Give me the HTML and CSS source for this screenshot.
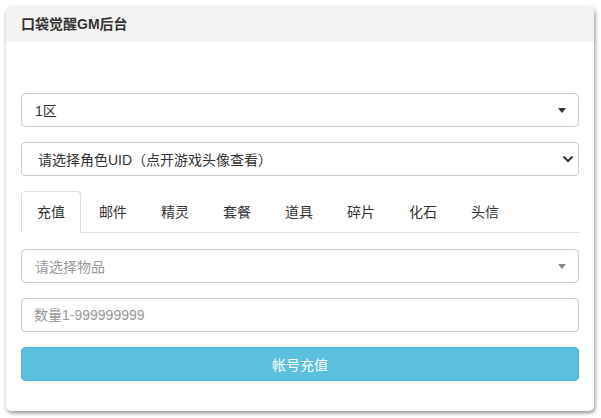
FILE: index.html
```html
<!DOCTYPE html>
<html lang="zh-CN">
<head>
  <meta charset="UTF-8" />
  <meta name="viewport" content="width=device-width, initial-scale=1.0">
  <title>口袋觉醒GM后台</title>
  <link rel="stylesheet" href="styles.css">
</head>
<body>
  <div class="panel">
    <div class="panel-heading">口袋觉醒GM后台</div>
    <div class="panel-body">
      <div class="form-group">
        <div class="select2">
          <span class="select2-text">1区</span>
          <span class="caret"></span>
        </div>
      </div>
      <div class="form-group">
        <div class="form-select">
          <span>请选择角色UID（点开游戏头像查看）</span>
          <svg class="chevron" width="12" height="8" viewBox="0 0 12 8"><path d="M1.5 1.5 L6 6 L10.5 1.5" fill="none" stroke="#333" stroke-width="2"/></svg>
        </div>
      </div>
      <ul class="nav-tabs">
        <li class="active">充值</li>
        <li>邮件</li>
        <li>精灵</li>
        <li>套餐</li>
        <li>道具</li>
        <li>碎片</li>
        <li>化石</li>
        <li>头信</li>
      </ul>
      <div class="tab-content">
        <div class="form-group">
          <div class="select2">
            <span class="select2-text placeholder">请选择物品</span>
            <span class="caret light"></span>
          </div>
        </div>
        <div class="form-group">
          <input class="form-control" type="text" placeholder="数量1-999999999">
        </div>
        <button class="btn-info">帐号充值</button>
      </div>
    </div>
  </div>
</body>
</html>
```

FILE: styles.css
```css
body { margin: 0; padding: 7px 6px; background: #fff; font-family: "Liberation Sans", "Noto Sans CJK SC", sans-serif; font-size: 14px; color: #333; }
.panel { width: 588px; background: #fff; border-radius: 5px; box-shadow: 1px 2px 4px rgba(0,0,0,0.45); overflow: hidden; }
.panel-heading { background: #f3f3f3; height: 35px; line-height: 35px; padding: 0 15px; font-weight: bold; font-size: 14px; color: #333; }
.panel-body { padding: 51px 15px 30px; }
.form-group { margin-bottom: 15px; }
.select2, .form-select { position: relative; height: 34px; border: 1px solid #ccc; border-radius: 4px; box-sizing: border-box; display: flex; align-items: center; justify-content: space-between; }
.select2 { padding: 0 12px 0 13px; }
.form-select { padding: 0 4px 0 16px; }
.placeholder { color: #999; }
.caret { width: 0; height: 0; border-left: 4px solid transparent; border-right: 4px solid transparent; border-top: 5px solid #333; }
.caret.light { border-top-color: #888; }
.nav-tabs { list-style: none; margin: 0; padding: 0; display: flex; border-bottom: 1px solid #ddd; }
.nav-tabs li { padding: 10px 15px; line-height: 20px; margin-right: 2px; margin-bottom: -1px; border: 1px solid transparent; border-radius: 4px 4px 0 0; color: #333; }
.nav-tabs li.active { border-color: #ddd; border-bottom-color: #fff; background: #fff; }
.tab-content { padding-top: 16px; }
.form-control { display: block; width: 100%; height: 34px; box-sizing: border-box; border: 1px solid #ccc; border-radius: 4px; padding: 6px 12px; font-family: inherit; font-size: 14px; color: #333; }
.form-control::placeholder { color: #999; }
.btn-info { display: block; width: 100%; height: 34px; border: 1px solid #46b8da; border-radius: 4px; background: #5bc0de; color: #fff; font-family: inherit; font-size: 14px; }
```
